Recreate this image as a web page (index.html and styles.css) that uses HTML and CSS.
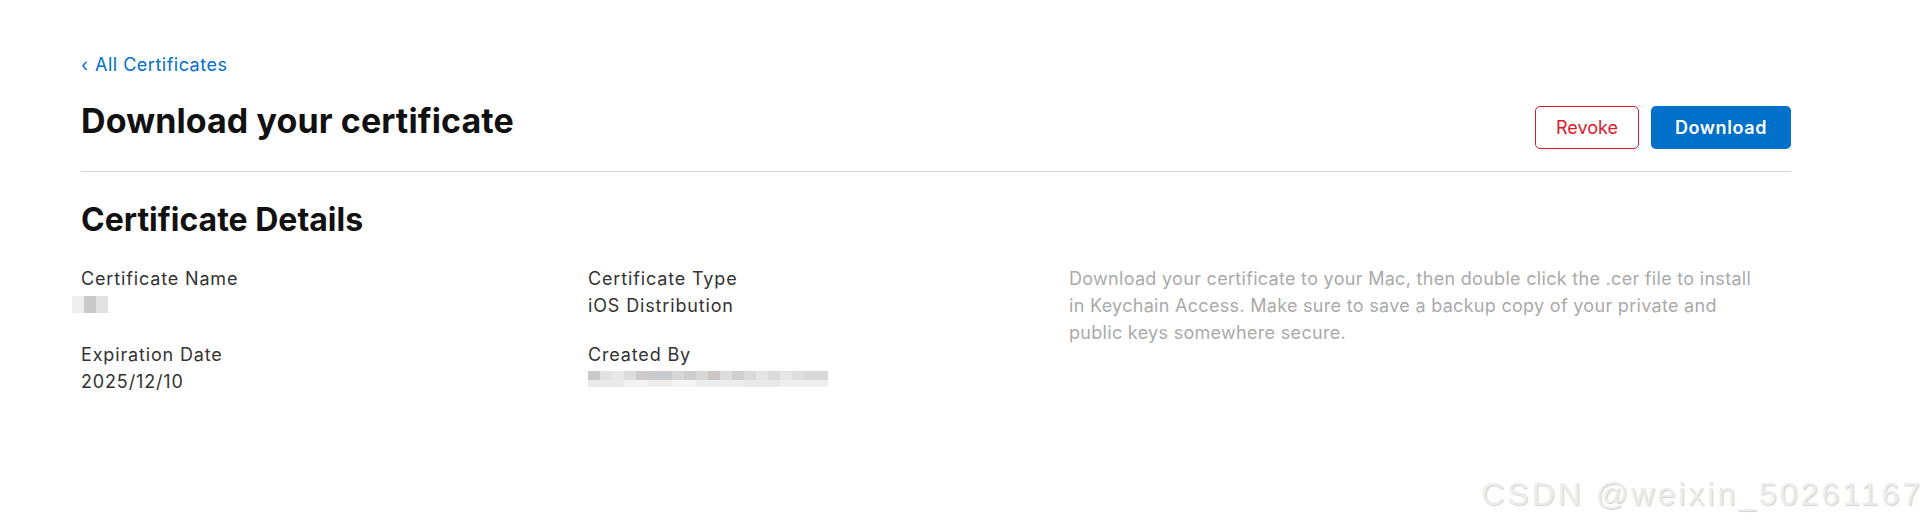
FILE: index.html
```html
<!DOCTYPE html>
<html lang="en">
  <head>
    <meta charset="UTF-8" />
    <meta name="viewport" content="width=device-width, initial-scale=1.0" />
    <title>Certificates - Download your certificate</title>
    <link rel="stylesheet" href="styles.css">
  </head>
  <body>
    <div class="container">
      <a class="back-link" href="#"><span class="chevron">&lsaquo;</span> All Certificates</a>

      <div class="page-header">
        <h1>Download your certificate</h1>
        <div class="header-actions">
          <button class="btn btn-revoke">Revoke</button>
          <button class="btn btn-download">Download</button>
        </div>
      </div>

      <h2 class="section-title">Certificate Details</h2>

      <div class="details">
        <div class="details-col">
          <div class="field">
            <div class="field-label">Certificate Name</div>
            <div class="field-value"><span class="mosaic mosaic-name"></span></div>
          </div>
          <div class="field">
            <div class="field-label">Expiration Date</div>
            <div class="field-value">2025/12/10</div>
          </div>
        </div>
        <div class="details-col">
          <div class="field">
            <div class="field-label">Certificate Type</div>
            <div class="field-value">iOS Distribution</div>
          </div>
          <div class="field">
            <div class="field-label">Created By</div>
            <div class="field-value"><span class="mosaic mosaic-creator"></span></div>
          </div>
        </div>
        <p class="details-note">
          Download your certificate to your Mac, then double click the .cer file to install
          in Keychain Access. Make sure to save a backup copy of your private and
          public keys somewhere secure.
        </p>
      </div>
    </div>

    <div class="watermark">CSDN @weixin_50261167</div>
  </body>
</html>
```

FILE: styles.css
```css
* {
  margin: 0;
  padding: 0;
  box-sizing: border-box;
}
body {
  font-family: Inter, "Noto Sans", sans-serif;
  background: #fff;
  color: #1d1d1f;
  min-height: 100vh;
  position: relative;
}
.container {
  width: 1710px;
  margin-left: 81px;
  padding-top: 52px;
}
.back-link {
  display: inline-block;
  font-size: 18px;
  line-height: 25px;
  letter-spacing: 0.5px;
  color: #0070c9;
  text-decoration: none;
}
.back-link .chevron {
  display: inline-block;
  margin-right: 1px;
}
.page-header {
  display: flex;
  justify-content: space-between;
  align-items: flex-end;
  margin-top: 23px;
  padding-bottom: 22px;
  border-bottom: 1px solid #d6d6d6;
}
.page-header h1 {
  font-size: 34px;
  line-height: 41px;
  font-weight: 700;
  letter-spacing: 0.1px;
  color: #111;
  margin-bottom: 8px;
}
.header-actions {
  display: flex;
  gap: 12px;
}
.btn {
  height: 43px;
  border-radius: 5px;
  font-family: Inter, "Noto Sans", sans-serif;
  font-size: 18px;
  cursor: pointer;
}
.btn-revoke {
  width: 104px;
  background: #fff;
  border: 1px solid #e0182d;
  color: #e0182d;
  font-weight: 400;
}
.btn-download {
  width: 140px;
  background: #0070c9;
  border: none;
  color: #fff;
  font-weight: 600;
  letter-spacing: 0.6px;
}
.section-title {
  margin-top: 30px;
  font-size: 32px;
  line-height: 36px;
  font-weight: 700;
  color: #111;
}
.details {
  display: grid;
  grid-template-columns: 507px 481px 1fr;
  margin-top: 27px;
}
.field + .field {
  margin-top: 22px;
}
.field-label,
.field-value {
  font-size: 18px;
  line-height: 27px;
  letter-spacing: 0.85px;
  color: #333;
}
.field-value {
  height: 27px;
}
.mosaic {
  display: inline-block;
  vertical-align: top;
}
.mosaic-name {
  width: 36px;
  height: 17px;
  margin-left: -9px;
  margin-top: 4px;
  background: linear-gradient(to right, #eeeeee 0 12px, #c9c9c9 12px 24px, #e1e1e1 24px 36px);
}
.mosaic-creator {
  width: 240px;
  height: 16px;
  margin-top: 3px;
  background:
    linear-gradient(to right, #c9c9c9 0 12px, #e2e2e2 12px 24px, #e8e8e8 24px 36px, #dcdcdc 36px 48px,
      #cfcaca 48px 60px, #c9c9cc 60px 72px, #c6cacd 72px 84px, #d6d6d6 84px 96px, #cdcdcd 96px 108px,
      #d7d7d7 108px 120px, #cbc6c4 120px 132px, #dcdcdc 132px 144px, #cfcfd1 144px 156px, #dadada 156px 168px,
      #e4e4e4 168px 180px, #dadada 180px 192px, #e6e6e6 192px 204px, #dedede 204px 216px, #d8d8d8 216px 240px)
      top / 100% 9px no-repeat,
    linear-gradient(to right, #eaeaea 0 36px, #f2f2f2 36px 60px, #ececec 60px 84px, #f4f4f4 84px 108px,
      #ededed 108px 156px, #e9e9e9 156px 192px, #efefef 192px 240px)
      bottom / 100% 7px no-repeat;
}
.details-note {
  max-width: 700px;
  font-size: 18px;
  line-height: 27px;
  letter-spacing: 0.3px;
  color: #aaa;
}
.watermark {
  position: absolute;
  right: 6px;
  top: 476px;
  font-family: "Liberation Sans", Arial, sans-serif;
  font-size: 32px;
  line-height: 36px;
  letter-spacing: 3px;
  color: #ececec;
  text-shadow: 1px 1px 1px #d2d2d2;
}
```
